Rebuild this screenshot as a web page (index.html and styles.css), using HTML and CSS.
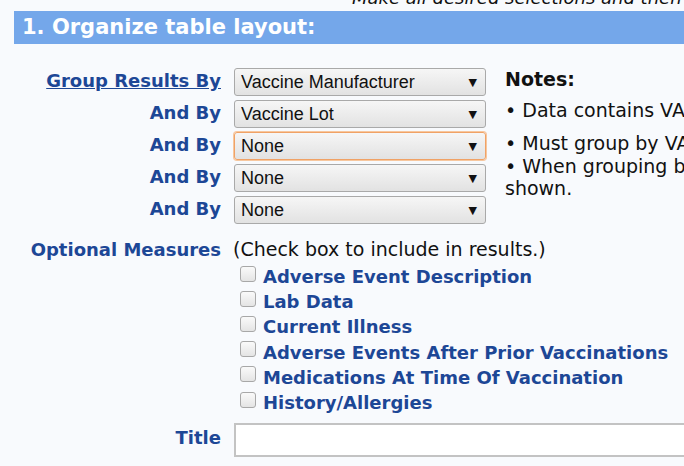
FILE: index.html
```html
<!DOCTYPE html>
<html>
<head>
<meta charset="utf-8">
<link rel="stylesheet" href="styles.css">
</head>
<body>
<p class="intro">Make all desired selections and then click Send at the bottom of the page.</p>
<h2 class="section">1. Organize table layout:</h2>
<div class="layout">
  <div class="groups">
    <div class="row">
      <a class="label link" href="#">Group Results By</a>
      <div class="sel"><select><option>Vaccine Manufacturer</option></select></div>
    </div>
    <div class="row">
      <span class="label">And By</span>
      <div class="sel"><select><option>Vaccine Lot</option></select></div>
    </div>
    <div class="row">
      <span class="label">And By</span>
      <div class="sel focus"><select><option>None</option></select></div>
    </div>
    <div class="row">
      <span class="label">And By</span>
      <div class="sel"><select><option>None</option></select></div>
    </div>
    <div class="row">
      <span class="label">And By</span>
      <div class="sel"><select><option>None</option></select></div>
    </div>
  </div>
  <div class="notes">
    <div class="notes-title">Notes:</div>
    <div class="note">• Data contains VAERS reports processed as of the date shown.</div>
    <div class="note tight">• Must group by VAERS ID to see individual reports.</div>
    <div class="note">• When grouping by lot, only the first lot listed is<br>shown.</div>
  </div>
</div>
<div class="measures">
  <div class="mrow">
    <span class="label">Optional Measures</span>
    <span class="hint">(Check box to include in results.)</span>
  </div>
  <ul class="checks">
    <li><span class="cb"></span>Adverse Event Description</li>
    <li><span class="cb"></span>Lab Data</li>
    <li><span class="cb"></span>Current Illness</li>
    <li><span class="cb"></span>Adverse Events After Prior Vaccinations</li>
    <li><span class="cb"></span>Medications At Time Of Vaccination</li>
    <li><span class="cb"></span>History/Allergies</li>
  </ul>
  <div class="trow">
    <span class="label">Title</span>
    <input class="title-input" type="text">
  </div>
</div>
</body>
</html>
```

FILE: styles.css
```css
html, body {
  margin: 0;
  padding: 0;
  background: #f8fafd;
  overflow: hidden;
}
body {
  width: 684px;
  height: 466px;
  font-family: "DejaVu Sans", Verdana, sans-serif;
  color: #111;
}
.intro {
  margin: -13px 0 0 0;
  padding-left: 352px;
  font-style: italic;
  font-size: 18px;
  line-height: 22px;
  white-space: nowrap;
  color: #111;
}
.section {
  margin: 2px 0 0 14px;
  height: 33px;
  line-height: 33px;
  background: #74a7ea;
  color: #fff;
  font-size: 21px;
  font-weight: bold;
  padding-left: 8px;
  white-space: nowrap;
}
.layout {
  display: flex;
  margin-top: 24px;
}
.groups {
  display: flex;
  flex-direction: column;
  gap: 4px;
  flex: none;
}
.row {
  display: flex;
  align-items: center;
  gap: 13px;
  height: 28px;
}
.row .label {
  padding-bottom: 3px;
}
.label {
  width: 221px;
  text-align: right;
  font-weight: bold;
  font-size: 18px;
  color: #1d4796;
  white-space: nowrap;
  flex: none;
}
.link {
  text-decoration: underline;
}
.sel {
  position: relative;
  width: 252px;
  height: 28px;
  box-sizing: border-box;
  border: 1px solid #a9a9a9;
  border-radius: 3px;
  background: linear-gradient(#f6f6f6, #e2e2e2);
}
.sel.focus {
  border-color: #f0a266;
  box-shadow: 0 0 0 1px #f7c79e;
}
.sel select {
  appearance: none;
  -webkit-appearance: none;
  border: 0;
  background: transparent;
  width: 100%;
  height: 100%;
  padding: 0 0 0 6px;
  font-family: "Liberation Sans", Arial, sans-serif;
  font-size: 18px;
  color: #111;
}
.sel::after {
  content: "▼";
  position: absolute;
  right: 8px;
  top: 7px;
  font-size: 11px;
  color: #111;
  pointer-events: none;
}
.notes {
  margin-left: 19px;
  font-size: 19px;
  line-height: 22px;
  width: 600px;
  flex: none;
}
.notes-title {
  font-weight: bold;
  margin: 0 0 9px;
  white-space: nowrap;
}
.note {
  margin-bottom: 11px;
  white-space: nowrap;
}
.note.tight {
  margin-bottom: 1px;
}
.measures {
  margin-top: 14px;
}
.mrow {
  display: flex;
  align-items: center;
  gap: 12px;
}
.hint {
  font-size: 19px;
}
.checks {
  list-style: none;
  margin: 4px 0 0 240px;
  padding: 0;
}
.checks li {
  display: flex;
  align-items: center;
  height: 25.2px;
  font-weight: bold;
  font-size: 18px;
  color: #1d4796;
  white-space: nowrap;
}
.cb {
  width: 16px;
  height: 16px;
  box-sizing: border-box;
  border: 1px solid #a8a8a8;
  border-radius: 3px;
  background: linear-gradient(#fafafa, #e4e4e4);
  margin-right: 7px;
  position: relative;
  top: -3px;
}
.trow {
  display: flex;
  align-items: center;
  gap: 13px;
  margin-top: 8px;
}
.trow .label {
  position: relative;
  top: -3px;
}
.title-input {
  width: 470px;
  height: 34px;
  box-sizing: border-box;
  border: 2px solid #c3c3c3;
  border-width: 2px 0 2px 2px;
  background: #fff;
  flex: none;
}
```
